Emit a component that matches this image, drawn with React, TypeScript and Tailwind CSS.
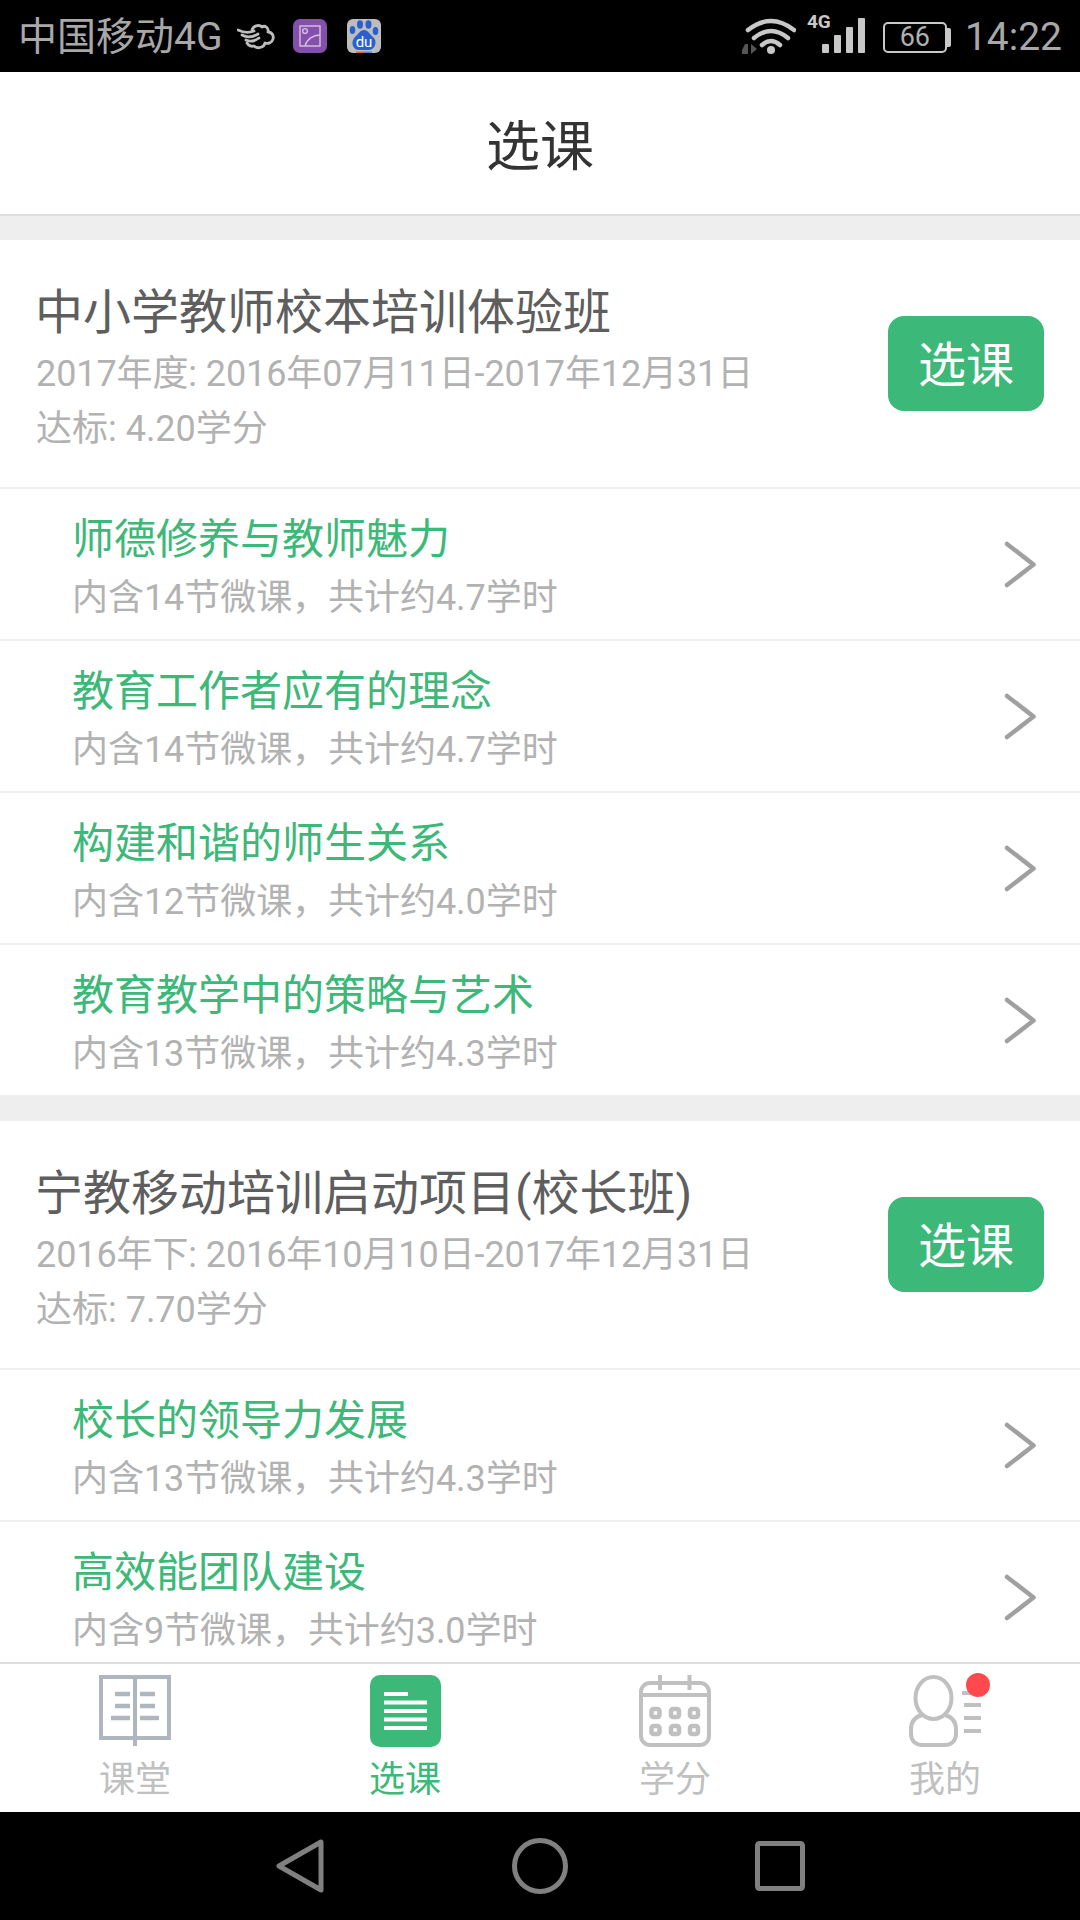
import React from "react";

const font = { fontFamily: 'Roboto, "Noto Sans CJK SC", sans-serif' };

function Row({ title, sub }: { title: string; sub: string }) {
  return (
    <div className="h-[152px] shrink-0 border-t-2 border-[#f0f0f0] pl-[72px] pr-[43px] flex items-center justify-between">
      <div className="flex flex-col pt-[10px]">
        <div className="text-[42px] leading-[58px] text-[#3cb878]">{title}</div>
        <div className="text-[36px] leading-[59px] text-[#b2b2b2] tracking-[-0.05px]">{sub}</div>
      </div>
      <svg width="33" height="47" viewBox="0 0 33 47" fill="none" stroke="#a0a0a0" strokeWidth="4.5" strokeLinecap="round" strokeLinejoin="round">
        <path d="M3 3 L29.5 23.5 L3 44" />
      </svg>
    </div>
  );
}

function Course({ title, l1, l2, rows }: { title: string; l1: string; l2: string; rows: [string, string][] }) {
  return (
    <div className="bg-white shrink-0">
      <div className="h-[247px] pl-[36px] pr-[36px] flex items-center justify-between">
        <div className="flex flex-col pt-[9px]">
          <div className="text-[48px] leading-[66px] text-[#5e5e5e] ml-[-1px]">{title}</div>
          <div className="text-[36px] leading-[56px] text-[#b2b2b2] tracking-[-0.1px]">{l1}</div>
          <div className="text-[36px] leading-[54px] text-[#b2b2b2]">{l2}</div>
        </div>
        <div className="w-[156px] h-[95px] pt-[5px] rounded-[16px] bg-[#3cb878] text-white text-[48px] flex items-center justify-center">选课</div>
      </div>
      {rows.map((r) => (
        <Row key={r[0]} title={r[0]} sub={r[1]} />
      ))}
    </div>
  );
}

function StatusBar() {
  return (
    <div className="h-[72px] shrink-0 bg-black flex items-center justify-between pl-[18px] pr-[18px]">
      <div className="flex items-center">
        <span className="text-[39px] text-[#a8a8a8] mt-[2px]">中国移动4G</span>
        <svg className="ml-[15px] mt-[1px]" width="38" height="26" viewBox="0 0 38 26" fill="none" stroke="#bdbdbd" strokeWidth="2.8" strokeLinecap="round" strokeLinejoin="round">
          <path d="M1 6 C7 9 12 9 17 7" />
          <path d="M5 11 C10 14 16 13 21 10" />
          <path d="M9 16 C13 18 18 17 22 14" />
          <path d="M15 6 C16 2 22 0 25 3 C28 1 32 4 31 8 C35 8 37 12 36 15 C35 19 31 20 28 19 C27 24 20 25 17 22 C14 23 11 21 10 19" />
        </svg>
        <div className="ml-[18px] w-[34px] h-[34px] rounded-[7px] bg-[#8550ac] flex items-center justify-center">
          <svg width="22" height="22" viewBox="0 0 22 22" fill="none" stroke="#d6c2e2" strokeWidth="1.4">
            <rect x="1" y="1" width="20" height="20" />
            <circle cx="6" cy="6" r="2.4" />
            <path d="M6 21 C8 14 14 10 21 10" />
          </svg>
        </div>
        <div className="ml-[20px] w-[34px] h-[34px] rounded-[6px] bg-[#bdbdbd] overflow-hidden">
          <svg width="34" height="34" viewBox="0 0 34 34">
            <g fill="#2a5fd0">
              <ellipse cx="5.5" cy="11" rx="2.8" ry="4" />
              <ellipse cx="13" cy="5.5" rx="3" ry="4.2" />
              <ellipse cx="21.5" cy="5.5" rx="3" ry="4.2" />
              <ellipse cx="28.5" cy="12" rx="2.8" ry="4" />
              <path d="M17 11 C21 11 22.5 15 26 18 C31 22 28 31 22 31 L12 31 C6 31 3 23 8 18 C11.5 15 13 11 17 11Z" />
            </g>
            <text x="17" y="28" fontSize="15" fill="#fff" textAnchor="middle" fontFamily="Roboto, sans-serif">du</text>
            <rect x="9" y="32.5" width="8" height="1.5" fill="#d8643c" />
            <rect x="17" y="32.5" width="8" height="1.5" fill="#5c7fd8" />
          </svg>
        </div>
      </div>
      <div className="flex items-center">
        <svg width="54" height="36" viewBox="0 0 54 36" fill="none" stroke="#c8c8c8" strokeWidth="4.5" strokeLinecap="round">
          <path d="M6 12 Q29 -6 52 12" />
          <path d="M12 20 Q29 6 46 20" />
          <path d="M20 27 Q29 19 38 27" />
          <circle cx="29" cy="32" r="4" fill="#c8c8c8" stroke="none" />
          <path d="M0 36 V32 L3 26 H6 V36 Z M9 26 L15 31 L9 36 Z" fill="#555555" stroke="none" />
        </svg>
        <div className="relative ml-[11px] w-[58px] h-[39px] mb-[5px]">
          <span className="absolute left-0 top-[-3px] text-[19px] font-bold text-[#c8c8c8] leading-[22px]">4G</span>
          <div className="absolute left-[15px] bottom-0 flex items-end gap-[5px]">
            <div className="w-[7px] h-[9px] bg-[#c8c8c8] rounded-[1px]" />
            <div className="w-[7px] h-[18px] bg-[#c8c8c8] rounded-[1px]" />
            <div className="w-[7px] h-[26px] bg-[#c8c8c8] rounded-[1px]" />
            <div className="w-[7px] h-[35px] bg-[#c8c8c8] rounded-[1px]" />
          </div>
        </div>
        <div className="ml-[18px] mt-[3px] flex items-center">
          <div className="w-[64px] h-[31px] border-[2px] border-[#c8c8c8] rounded-[5px] flex items-center justify-center text-[27px] leading-none text-[#b0b0b0]">66</div>
          <div className="w-[4px] h-[19px] bg-[#c8c8c8] rounded-r-[2px]" />
        </div>
        <span className="ml-[14px] mt-[2px] text-[39px] text-[#a8a8a8] leading-none">14:22</span>
      </div>
    </div>
  );
}

function Tab({ label, active, children }: { label: string; active?: boolean; children: React.ReactNode }) {
  return (
    <div className="flex-1 flex flex-col items-center">
      <div className="h-[72px] flex items-center justify-center relative">{children}</div>
      <div className={`text-[36px] leading-[46px] mt-[10px] ${active ? "text-[#3cb878]" : "text-[#c0c0c0]"}`}>{label}</div>
    </div>
  );
}

export default function App() {
  return (
    <div style={font} className="w-[1080px] h-[1920px] flex flex-col bg-[#eeeeee] overflow-hidden">
      <StatusBar />
      <div className="h-[144px] shrink-0 bg-white border-b-2 border-[#dddddd] pt-[8px] flex items-center justify-center text-[54px] text-[#333333]">选课</div>
      <div className="flex-1 min-h-0 overflow-hidden flex flex-col pt-[24px] gap-[26px]">
        <Course
          title="中小学教师校本培训体验班"
          l1="2017年度: 2016年07月11日-2017年12月31日"
          l2="达标: 4.20学分"
          rows={[
            ["师德修养与教师魅力", "内含14节微课，共计约4.7学时"],
            ["教育工作者应有的理念", "内含14节微课，共计约4.7学时"],
            ["构建和谐的师生关系", "内含12节微课，共计约4.0学时"],
            ["教育教学中的策略与艺术", "内含13节微课，共计约4.3学时"],
          ]}
        />
        <Course
          title="宁教移动培训启动项目(校长班)"
          l1="2016年下: 2016年10月10日-2017年12月31日"
          l2="达标: 7.70学分"
          rows={[
            ["校长的领导力发展", "内含13节微课，共计约4.3学时"],
            ["高效能团队建设", "内含9节微课，共计约3.0学时"],
          ]}
        />
      </div>
      <div className="h-[150px] shrink-0 bg-white border-t-2 border-[#dddddd] flex pt-[11px]">
        <Tab label="课堂">
          <svg width="72" height="72" viewBox="0 0 72 72" fill="none" stroke="#b0b6be" strokeWidth="4">
            <path d="M2 2 H70 V63 H2 Z" />
            <path d="M36 2 V71" />
            <path d="M16 19 H31 M16 31 H31 M12 43 H31 M41 19 H56 M41 31 H56 M41 43 H60" strokeWidth="4.5" />
          </svg>
        </Tab>
        <Tab label="选课" active>
          <div className="w-[71px] h-[72px] rounded-[10px] bg-[#3cb878] flex items-center justify-center">
            <svg width="43" height="38" viewBox="0 0 43 38" fill="#fff">
              <rect x="0" y="0" width="24" height="4" />
              <rect x="0" y="8.5" width="43" height="4" />
              <rect x="0" y="17" width="43" height="4" />
              <rect x="0" y="25.5" width="43" height="4" />
              <rect x="0" y="34" width="43" height="4" />
            </svg>
          </div>
        </Tab>
        <Tab label="学分">
          <svg width="72" height="72" viewBox="0 0 72 72" fill="none" stroke="#c0c0c0" strokeWidth="4">
            <rect x="2" y="8" width="68" height="62" rx="9" />
            <path d="M2 20 H70 M21 0 V15 M50.5 0 V15" />
            <g strokeWidth="4.5">
              <rect x="12.5" y="34" width="8" height="8" rx="2" />
              <rect x="32" y="34" width="8" height="8" rx="2" />
              <rect x="51" y="34" width="8" height="8" rx="2" />
              <rect x="12.5" y="51" width="8" height="8" rx="2" />
              <rect x="32" y="51" width="8" height="8" rx="2" />
              <rect x="51" y="51" width="8" height="8" rx="2" />
            </g>
          </svg>
        </Tab>
        <Tab label="我的">
          <svg width="72" height="72" viewBox="0 0 72 72" fill="none" stroke="#c0c0c0" strokeWidth="4">
            <ellipse cx="24.5" cy="23" rx="18" ry="21" />
            <path d="M13 40 C6 42 2 47 2 54 V59 C2 66 7 70 13 70 H36 C42 70 47 66 47 59 V54 C47 47 43 42 36 40" />
            <path d="M53 18 H72 M55 30 H72 M55 43 H72 M55 56 H72" />
          </svg>
          <div className="absolute right-[-9px] top-[-2px] w-[24px] h-[24px] rounded-full bg-[#ff4a4d]" />
        </Tab>
      </div>
      <div className="h-[108px] shrink-0 bg-black flex items-center justify-center">
        <svg width="48" height="54" viewBox="0 0 48 54" fill="none" stroke="#808080" strokeWidth="5" strokeLinejoin="round" className="mr-[188px]">
          <path d="M45 3 V51 L3 27 Z" />
        </svg>
        <svg width="56" height="56" viewBox="0 0 56 56" fill="none" stroke="#808080" strokeWidth="5" className="mr-[187px]">
          <circle cx="28" cy="28" r="25.5" />
        </svg>
        <svg width="50" height="50" viewBox="0 0 50 50" fill="none" stroke="#808080" strokeWidth="5" strokeLinejoin="round">
          <rect x="2.5" y="2.5" width="45" height="45" rx="2" />
        </svg>
      </div>
    </div>
  );
}
